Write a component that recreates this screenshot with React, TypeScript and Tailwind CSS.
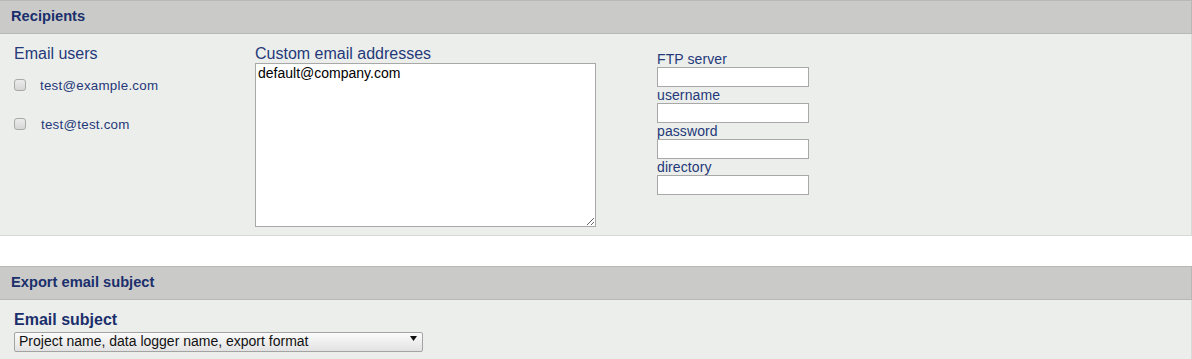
import { useState } from 'react';

const users = ['test@example.com', 'test@test.com'];
const ftpFields = ['FTP server', 'username', 'password', 'directory'];

function PanelHeader({ title }: { title: string }) {
  return (
    <div className="h-[34px] flex items-center pl-[11px] pb-[2px] bg-[#cacbc8] border-y border-r border-[#b8b9b6] text-[14.67px] font-bold text-[#1b2f6c]">
      {title}
    </div>
  );
}

export default function App() {
  const [checked, setChecked] = useState<Record<string, boolean>>({});
  const [subject, setSubject] = useState('default');

  return (
    <div className="w-[1192px] bg-white font-['Liberation_Sans',Arial,sans-serif] text-[#24397a]">
      <section>
        <PanelHeader title="Recipients" />
        <div className="flex pl-[14px] pt-[10px] pb-[8px] bg-[#eceeeb] border-b border-r border-[#d9dad7]">
          <div className="w-[241px]">
            <div className="text-[16px] leading-[19px]">Email users</div>
            <div className="mt-[16px]">
              {users.map((u, i) => (
                <label key={u} className="flex items-start h-[39px]">
                  <input
                    type="checkbox"
                    checked={!!checked[u]}
                    onChange={() => setChecked({ ...checked, [u]: !checked[u] })}
                    className="appearance-none w-[12px] h-[12px] rounded-[3px] border border-[#a9aaa8] bg-gradient-to-b from-[#ececec] to-[#d6d6d6] shrink-0"
                  />
                  <span className={`text-[13.33px] leading-[14px] tracking-[0.25px] ${i === 0 ? 'ml-[14px]' : 'ml-[15px]'}`}>{u}</span>
                </label>
              ))}
            </div>
          </div>

          <div className="w-[402px]">
            <div className="text-[16px] leading-[19px]">Custom email addresses</div>
            <textarea
              defaultValue="default@company.com"
              className="block w-[341px] h-[164px] bg-white border border-[#a8a8a8] px-[2px] py-[1px] text-[14px] leading-[17px] text-black"
            />
          </div>

          <div className="mt-[7px] flex flex-col">
            {ftpFields.map((f) => (
              <div key={f}>
                <div className="text-[14px] leading-4 tracking-[0.1px]">{f}</div>
                <input
                  type={f === 'password' ? 'password' : 'text'}
                  className="block w-[152px] h-[20px] bg-white border border-[#a8a8a8] px-[2px] text-[13px] text-black"
                />
              </div>
            ))}
          </div>
        </div>
      </section>

      <div className="h-[30px]" />

      <section>
        <PanelHeader title="Export email subject" />
        <div className="pl-[14px] pt-[11px] pb-[10px] bg-[#eceeeb] border-b border-r border-[#d9dad7]">
          <div className="text-[16px] leading-[18px] font-bold text-[#1b2f6c]">Email subject</div>
          <div className="relative w-[409px] h-[20px]">
            <select
              value={subject}
              onChange={(e) => setSubject(e.target.value)}
              className="appearance-none w-full h-full rounded-[2px] border border-[#a3a3a3] bg-gradient-to-b from-[#fbfbfb] to-[#e2e2e2] pl-[4px] pb-[2px] text-[14px] leading-[16px] text-[#111]"
            >
              <option value="default">Project name, data logger name, export format</option>
              <option value="project">Project name</option>
              <option value="logger">Data logger name</option>
            </select>
            <svg className="absolute right-[6px] top-[7px] pointer-events-none" width="7" height="5" viewBox="0 0 7 5">
              <path d="M0 0h7L3.5 5z" fill="#111" />
            </svg>
          </div>
        </div>
      </section>
    </div>
  );
}
